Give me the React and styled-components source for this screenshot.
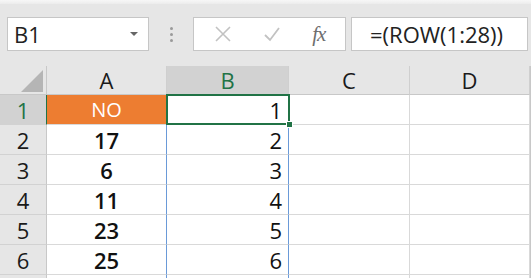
import React from 'react';
import styled, { createGlobalStyle } from 'styled-components';

const GlobalStyle = createGlobalStyle`
  body {
    margin: 0;
    background: #e6e6e6;
    font-family: "Open Sans", "Noto Sans", sans-serif;
  }
`;

const Page = styled.div`
  width: 531px;
  height: 278px;
  overflow: hidden;
  background: #e6e6e6;
`;

const TopBand = styled.div`
  height: 4px;
  background: linear-gradient(#f7f7f7, #ececec);
`;

const FormulaBar = styled.div`
  display: flex;
  align-items: center;
  height: 34px;
  padding: 13px 3px 15px 7px;
`;

const Box = styled.div`
  box-sizing: border-box;
  height: 34px;
  background: #fff;
  border: 1px solid #c6c6c6;
  display: flex;
  align-items: center;
`;

const NameBox = styled(Box)`
  width: 142px;
  padding: 0 10px 0 6px;
  justify-content: space-between;
  font-size: 22px;
  color: #222;
`;

const Caret = styled.span`
  width: 0;
  height: 0;
  border-left: 4px solid transparent;
  border-right: 4px solid transparent;
  border-top: 4px solid #666;
`;

const Dots = styled.div`
  width: 44px;
  display: flex;
  flex-direction: column;
  align-items: center;
  gap: 3px;
  span {
    width: 3px;
    height: 3px;
    border-radius: 50%;
    background: #9a9a9a;
  }
`;

const ButtonGroup = styled(Box)`
  width: 153px;
  justify-content: space-around;
  padding: 0 4px;
`;

const Fx = styled.span`
  font-family: "Liberation Serif", "DejaVu Serif", serif;
  font-style: italic;
  font-size: 21px;
  color: #6e6e6e;
  letter-spacing: -1px;
`;

const FormulaInput = styled(Box)`
  flex: 1;
  margin-left: 5px;
  padding-left: 18px;
  font-size: 22px;
  color: #222;
`;

const Sheet = styled.div`
  position: relative;
  display: grid;
  grid-template-columns: 47px 120px 122px 121px 120px 1px;
  grid-template-rows: 29px repeat(7, 30px);
`;

const Corner = styled.div`
  box-sizing: border-box;
  border-right: 1px solid #c8c8c8;
  border-bottom: 1px solid #c8c8c8;
  display: flex;
  align-items: flex-end;
  justify-content: flex-end;
  padding: 0 3px 2px 0;
`;

const ColHead = styled.div`
  box-sizing: border-box;
  display: flex;
  align-items: center;
  justify-content: center;
  font-size: 22px;
  color: ${(p) => (p.$active ? '#217346' : '#1a1a1a')};
  background: ${(p) => (p.$active ? '#d2d2d2' : '#e6e6e6')};
  border-right: 1px solid #cfcfcf;
  border-bottom: 1px solid ${(p) => (p.$active ? '#217346' : '#c8c8c8')};
`;

const RowHead = styled.div`
  box-sizing: border-box;
  display: flex;
  align-items: center;
  justify-content: center;
  font-size: 22px;
  color: ${(p) => (p.$active ? '#217346' : '#1a1a1a')};
  background: ${(p) => (p.$active ? '#d2d2d2' : '#e6e6e6')};
  border-right: 1px solid ${(p) => (p.$active ? '#217346' : '#c8c8c8')};
  border-bottom: 1px solid #d2d2d2;
`;

const Cell = styled.div`
  box-sizing: border-box;
  display: flex;
  align-items: center;
  justify-content: ${(p) => (p.$right ? 'flex-end' : 'center')};
  padding: ${(p) => (p.$right ? '0 6px 0 0' : '0')};
  font-size: ${(p) => (p.$fill ? '20px' : '22px')};
  font-weight: ${(p) => (p.$bold ? 600 : 400)};
  color: ${(p) => (p.$fill ? '#fff' : '#111')};
  background: ${(p) => p.$fill || '#fff'};
  border-right: 1px solid ${(p) => p.$edge || '#d9d9d9'};
  border-bottom: 1px solid #d9d9d9;
`;

const Edge = styled.div`
  background: #c8c8c8;
`;

const Selection = styled.div`
  position: absolute;
  left: 166px;
  top: 28px;
  width: 124px;
  height: 31px;
  box-sizing: border-box;
  border: 2px solid #217346;
  pointer-events: none;
`;

const Handle = styled.div`
  position: absolute;
  right: -5px;
  bottom: -5px;
  width: 7px;
  height: 7px;
  box-sizing: border-box;
  background: #217346;
  border: 1px solid #fff;
`;

const colA = ['NO', '17', '6', '11', '23', '25', ''];
const BLUE = '#6a9ad8';

export default function App() {
  return (
    <Page>
      <GlobalStyle />
      <TopBand />
      <FormulaBar>
        <NameBox>
          <span>B1</span>
          <Caret />
        </NameBox>
        <Dots>
          <span />
          <span />
          <span />
        </Dots>
        <ButtonGroup>
          <svg width="18" height="18" viewBox="0 0 18 18">
            <path d="M2 2 L16 16 M16 2 L2 16" stroke="#c2c2c2" strokeWidth="1.6" />
          </svg>
          <svg width="18" height="18" viewBox="0 0 18 18">
            <path d="M2 10 L7 15 L16 3" stroke="#c2c2c2" strokeWidth="1.8" fill="none" />
          </svg>
          <Fx>fx</Fx>
        </ButtonGroup>
        <FormulaInput>=(ROW(1:28))</FormulaInput>
      </FormulaBar>
      <Sheet>
        <Corner>
          <svg width="22" height="22" viewBox="0 0 22 22">
            <polygon points="22,0 22,22 0,22" fill="#b5b5b5" />
          </svg>
        </Corner>
        <ColHead>A</ColHead>
        <ColHead $active>B</ColHead>
        <ColHead>C</ColHead>
        <ColHead>D</ColHead>
        <Edge />
        {colA.map((v, i) => (
          <React.Fragment key={i}>
            <RowHead $active={i === 0}>{i < 6 ? i + 1 : ''}</RowHead>
            <Cell $fill={i === 0 ? '#ed7d31' : undefined} $bold={i > 0} $edge={i > 0 ? BLUE : undefined}>
              {v}
            </Cell>
            <Cell $right $edge={i > 0 ? BLUE : undefined}>
              {i < 6 ? i + 1 : ''}
            </Cell>
            <Cell />
            <Cell />
            <Edge />
          </React.Fragment>
        ))}
        <Selection>
          <Handle />
        </Selection>
      </Sheet>
    </Page>
  );
}
